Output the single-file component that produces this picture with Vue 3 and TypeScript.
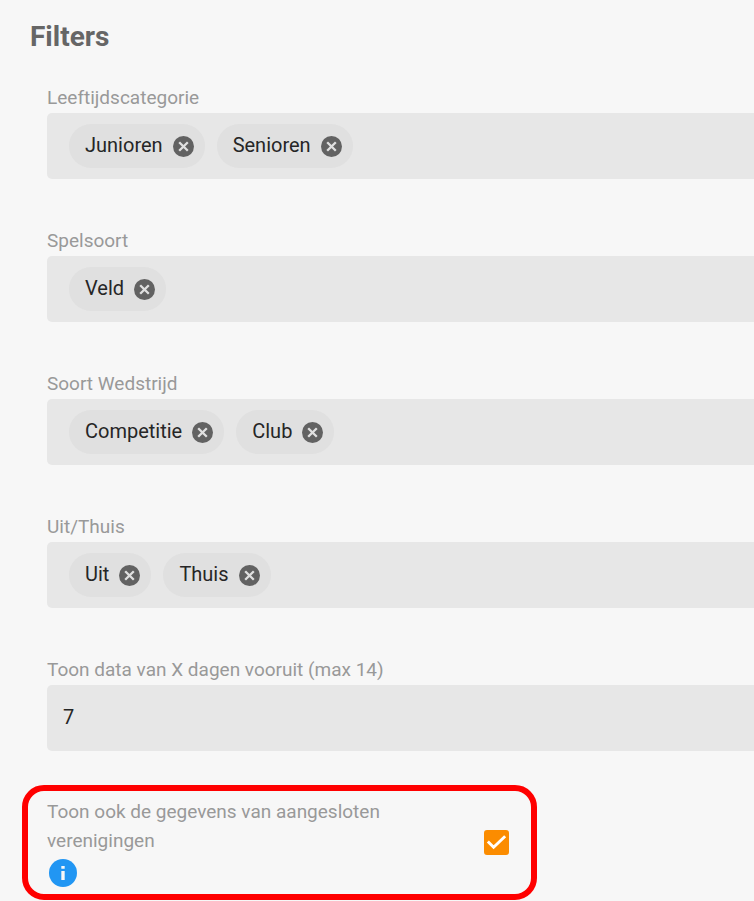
<script setup lang="ts">
import { reactive, ref } from 'vue'

interface ChipFilter {
  id: string
  label: string
  chips: string[]
}

const filters = reactive<ChipFilter[]>([
  { id: 'leeftijd', label: 'Leeftijdscategorie', chips: ['Junioren', 'Senioren'] },
  { id: 'spelsoort', label: 'Spelsoort', chips: ['Veld'] },
  { id: 'wedstrijd', label: 'Soort Wedstrijd', chips: ['Competitie', 'Club'] },
  { id: 'uitthuis', label: 'Uit/Thuis', chips: ['Uit', 'Thuis'] },
])

const days = ref('7')
const showAffiliated = ref(true)

function removeChip(filter: ChipFilter, chip: string): void {
  filter.chips = filter.chips.filter((c) => c !== chip)
}
</script>

<template>
  <main class="filters">
    <h1 class="title">Filters</h1>
    <div class="fields">
      <div v-for="filter in filters" :key="filter.id" class="field">
        <span :id="filter.id" class="label">{{ filter.label }}</span>
        <div class="box chip-box" role="group" :aria-labelledby="filter.id">
          <span v-for="chip in filter.chips" :key="chip" class="chip">
            <span class="chip-text">{{ chip }}</span>
            <button class="remove" type="button" :aria-label="chip" @click="removeChip(filter, chip)">
              <svg class="remove-icon" viewBox="2 2 20 20" aria-hidden="true">
                <circle class="remove-disc" cx="12" cy="12" r="10" />
                <path class="remove-cross" d="M7.9 7.9l8.2 8.2M16.1 7.9l-8.2 8.2" />
              </svg>
            </button>
          </span>
        </div>
      </div>
      <div class="field">
        <label class="label" for="days">Toon data van X dagen vooruit (max 14)</label>
        <input id="days" v-model="days" class="box days" type="text" inputmode="numeric" />
      </div>
    </div>
    <div class="framed">
      <div class="option">
        <label class="label" for="affiliated">Toon ook de gegevens van aangesloten verenigingen</label>
        <svg class="info" viewBox="2 2 20 20" aria-hidden="true">
          <circle class="info-disc" cx="12" cy="12" r="10" />
          <path class="info-mark" d="M10.8 7h2.4v2h-2.4zM10.8 10.6h2.4v6.4h-2.4z" />
        </svg>
      </div>
      <span class="check">
        <input id="affiliated" v-model="showAffiliated" class="check-input" type="checkbox" />
        <svg v-if="showAffiliated" class="check-mark" viewBox="0 0 26 26" aria-hidden="true">
          <path d="M4 12l6 6L22 6.500" />
        </svg>
      </span>
    </div>
  </main>
</template>

<style>
body {
  background: #f7f7f7;
}
</style>

<style scoped>
.filters {
  box-sizing: border-box;
  padding-top: 20px;
  font-family: Roboto, "Liberation Sans", sans-serif;
  font-size: 20px;
  color: #262626;
}

.title {
  margin: 0 0 30px 30px;
  font-size: 28px;
  line-height: 34px;
  font-weight: 700;
  color: #666;
}

.fields {
  display: flex;
  flex-direction: column;
  gap: 48px;
  padding-left: 47px;
}

.field {
  display: flex;
  flex-direction: column;
}

.label {
  font-size: 19px;
  line-height: 29px;
  font-weight: 400;
  color: #999;
}

.field .label {
  line-height: 27px;
  padding-bottom: 2px;
}

.box {
  box-sizing: border-box;
  min-height: 66px;
  border: 0;
  border-radius: 5px 0 0 5px;
  background: #e7e7e7;
}

.chip-box {
  display: flex;
  flex-wrap: wrap;
  align-items: center;
  gap: 12px;
  padding: 11px 22px;
}

.chip {
  display: flex;
  align-items: center;
  gap: 10px;
  height: 44px;
  padding: 0 11px 0 16px;
  border-radius: 22px;
  background: #e0e0e0;
}

.chip-text {
  line-height: 24px;
  padding-bottom: 2px;
}

.remove {
  display: flex;
  padding: 0;
  border: 0;
  background: none;
  cursor: pointer;
}

.remove-icon {
  width: 21px;
  height: 21px;
}

.remove-disc {
  fill: #626262;
}

.remove-cross {
  fill: none;
  stroke: #e0e0e0;
  stroke-width: 2.2;
}

.days {
  width: 100%;
  padding: 0 16px 2px;
  font: inherit;
  color: inherit;
}

.framed {
  box-sizing: border-box;
  display: flex;
  align-items: center;
  justify-content: space-between;
  max-width: 515px;
  margin: 34px 22px 0;
  padding: 6px 22px 5px 19px;
  border: 6px solid #f00;
  border-radius: 22px;
}

.option {
  display: flex;
  flex-direction: column;
  max-width: 360px;
}

.info {
  width: 28px;
  height: 28px;
  margin: 4px 2px 2px;
}

.info-disc {
  fill: #2196f3;
}

.info-mark {
  fill: #f7f7f7;
}

.check {
  position: relative;
  display: flex;
  margin-bottom: 2px;
}

.check-input {
  appearance: none;
  width: 25px;
  height: 25px;
  margin: 0;
  border: 2px solid #fb8c00;
  border-radius: 3px;
}

.check-input:checked {
  background: #fb8c00;
}

.check-mark {
  position: absolute;
  inset: 0;
  fill: none;
  stroke: #fff;
  stroke-width: 3;
  pointer-events: none;
}
</style>
